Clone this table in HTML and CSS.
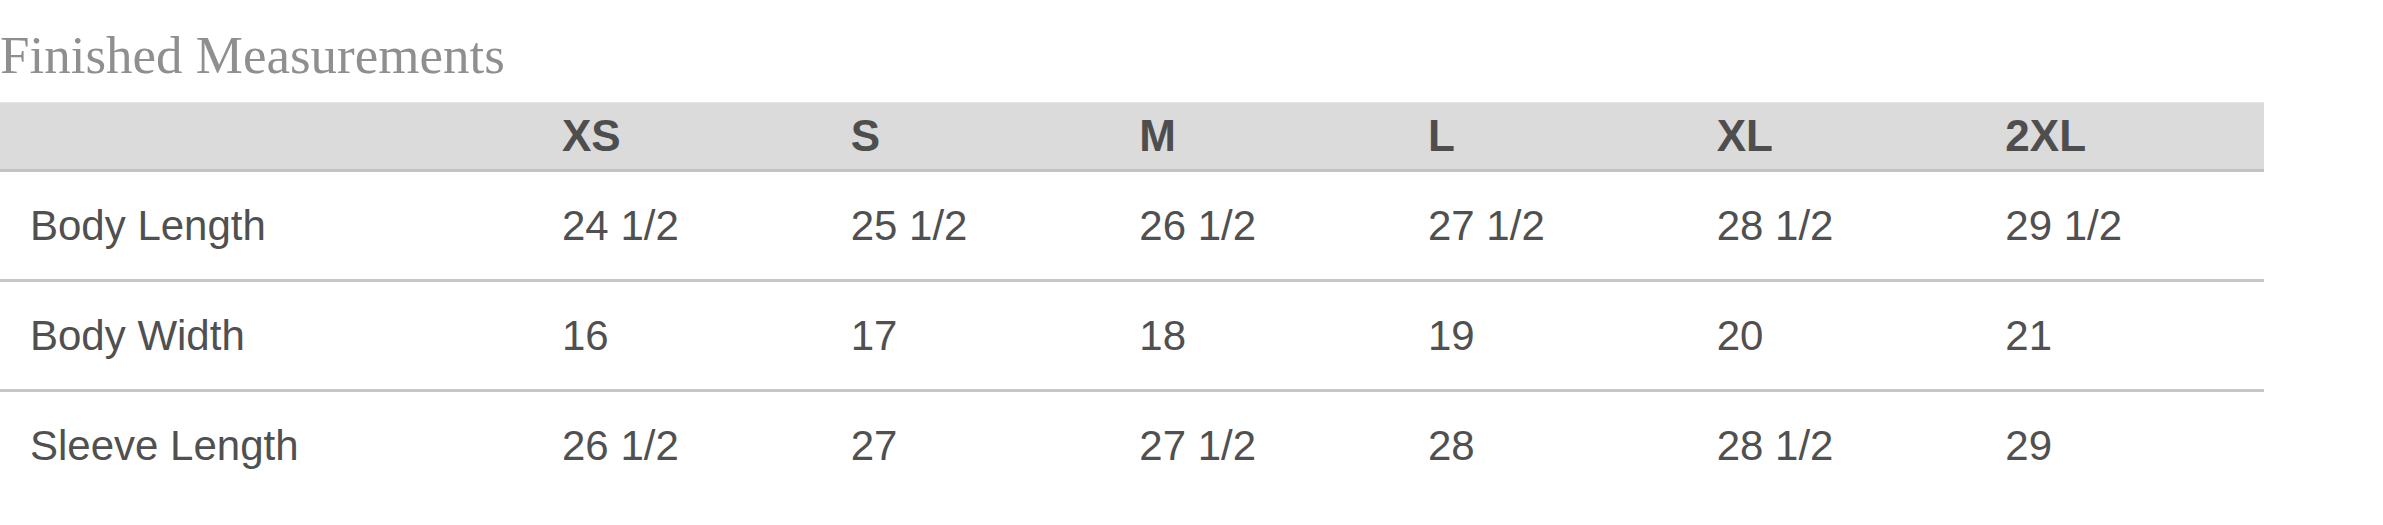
FILE: index.html
```html
<!DOCTYPE html>
<html lang="en">
<head>
<meta charset="utf-8">
<title>Finished Measurements</title>
<link rel="stylesheet" href="styles.css">
</head>
<body>
<section class="sheet">
  <h1 class="title">Finished Measurements</h1>
  <div class="chart">
    <div class="row head">
      <div class="cell"></div>
      <div class="cell">XS</div>
      <div class="cell">S</div>
      <div class="cell">M</div>
      <div class="cell">L</div>
      <div class="cell">XL</div>
      <div class="cell">2XL</div>
    </div>
    <div class="row body lined">
      <div class="cell">Body Length</div>
      <div class="cell">24 1/2</div>
      <div class="cell">25 1/2</div>
      <div class="cell">26 1/2</div>
      <div class="cell">27 1/2</div>
      <div class="cell">28 1/2</div>
      <div class="cell">29 1/2</div>
    </div>
    <div class="row body lined">
      <div class="cell">Body Width</div>
      <div class="cell">16</div>
      <div class="cell">17</div>
      <div class="cell">18</div>
      <div class="cell">19</div>
      <div class="cell">20</div>
      <div class="cell">21</div>
    </div>
    <div class="row body">
      <div class="cell">Sleeve Length</div>
      <div class="cell">26 1/2</div>
      <div class="cell">27</div>
      <div class="cell">27 1/2</div>
      <div class="cell">28</div>
      <div class="cell">28 1/2</div>
      <div class="cell">29</div>
    </div>
  </div>
</section>
</body>
</html>
```

FILE: styles.css
```css
html, body {
  margin: 0;
  padding: 0;
  background: #ffffff;
}

.sheet {
  padding-top: 25px;
}

.title {
  margin: 0 0 17px 0;
  font-family: "Liberation Serif", "Times New Roman", serif;
  font-weight: normal;
  font-size: 53px;
  line-height: 60px;
  height: 60px;
  color: #8f8f8f;
  white-space: nowrap;
}

.chart {
  width: 2264px;
  font-family: "Liberation Sans", Arial, sans-serif;
  color: #505050;
}

.row {
  display: grid;
  grid-template-columns: 532px repeat(6, 1fr);
}

.cell {
  display: flex;
  align-items: center;
  padding-left: 30px;
  white-space: nowrap;
}

.head {
  height: 66px;
  background: #dbdbdb;
  border-top: 1px solid #e6e6e6;
  border-bottom: 3px solid #c3c3c3;
  font-weight: bold;
  font-size: 44px;
  color: #4e4e4e;
}

.body {
  height: 107px;
  font-size: 42px;
}

.lined {
  border-bottom: 3px solid #c6c6c6;
}
```
